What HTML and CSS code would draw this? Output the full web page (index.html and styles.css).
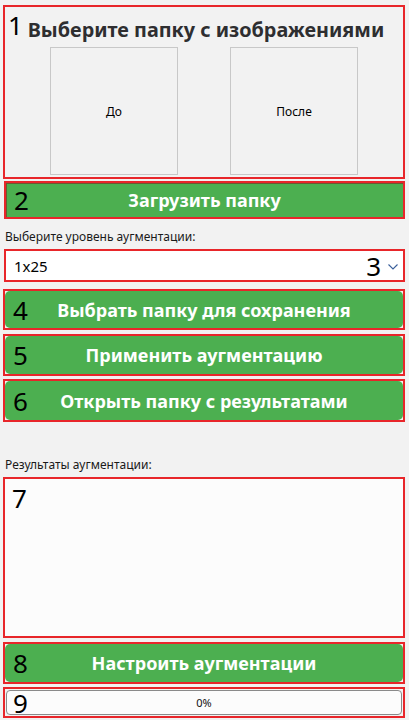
FILE: index.html
```html
<!DOCTYPE html>
<html lang="ru">
<head>
<meta charset="utf-8">
<title>Аугментация</title>
<link rel="stylesheet" href="styles.css">
</head>
<body>
<div class="app">
  <section class="box preview">
    <span class="num num-top">1</span>
    <h1 class="title">Выберите папку с изображениями</h1>
    <div class="frames">
      <div class="frame">До</div>
      <div class="frame">После</div>
    </div>
  </section>

  <div class="box btn-wrap b2"><span class="num">2</span><div class="btn">Загрузить папку</div></div>

  <div class="label l1">Выберите уровень аугментации:</div>
  <div class="box combo">
    <span class="combo-val">1x25</span>
    <span class="num num-combo">3</span>
    <svg class="chev" width="10" height="6" viewBox="0 0 10 6"><polyline points="0.5,0.5 5,5 9.5,0.5" fill="none" stroke="#3a5f9a" stroke-width="1.1"/></svg>
  </div>

  <div class="box btn-wrap b4"><span class="num">4</span><div class="btn">Выбрать папку для сохранения</div></div>
  <div class="box btn-wrap b5"><span class="num">5</span><div class="btn">Применить аугментацию</div></div>
  <div class="box btn-wrap b6"><span class="num">6</span><div class="btn">Открыть папку с результатами</div></div>

  <div class="label l2">Результаты аугментации:</div>
  <div class="box results"><span class="num num-top7">7</span></div>

  <div class="box btn-wrap b8"><span class="num">8</span><div class="btn">Настроить аугментации</div></div>
  <div class="box progress-wrap">
    <div class="progress"><span class="num num-prog">9</span><span class="pct">0%</span></div>
  </div>
</div>
</body>
</html>
```
FILE: styles.css
```css
* { box-sizing: border-box; }
html, body { margin: 0; padding: 0; }
body {
  background: #f2f2f2;
  font-family: "Noto Sans", "Open Sans", sans-serif;
  color: #000;
  width: 409px;
  height: 720px;
  overflow: hidden;
}
.app {
  display: flex;
  flex-direction: column;
  padding: 5px 4px 0 3px;
}
.box {
  position: relative;
  border: 2px solid #e8262a;
}
.num {
  position: absolute;
  font-size: 26px;
  line-height: 1;
  font-weight: 400;
  color: #000;
  left: 8px;
  top: 50%;
  transform: translateY(-50%);
}
.preview {
  height: 174px;
  display: flex;
  flex-direction: column;
  align-items: center;
  background: #f2f2f2;
}
.num-top { top: 5px; transform: none; left: 3px; }
.title {
  margin: 10px 0 0 4px;
  font-size: 19.8px;
  line-height: 26px;
  font-weight: 700;
  color: #2e2e30;
}
.frames {
  display: flex;
  gap: 52px;
  margin-top: 4px;
}
.frame {
  width: 128px;
  height: 128px;
  border: 1px solid #c8c8c8;
  display: flex;
  align-items: center;
  justify-content: center;
  font-size: 12px;
  color: #000;
}
.btn-wrap {
  display: flex;
  padding: 0;
}
.btn {
  flex: 1;
  background: #4caf50;
  border-radius: 5px;
  color: #fff;
  font-weight: 700;
  font-size: 18px;
  display: flex;
  align-items: center;
  justify-content: center;
}
.btn-wrap .num { z-index: 1; }
.b2 { margin-top: 2px; height: 38px; margin-left: 1px; }
.b2 .btn { border-radius: 0; box-shadow: inset 1px 1px 0 #6b5a30; }
.label {
  font-size: 12px;
  line-height: 16px;
  padding-left: 2px;
  color: #1a1a1a;
}
.l1 { margin-top: 10px; }
.combo {
  margin-top: 4px;
  margin-left: 1px;
  height: 33px;
  background: #fff;
  display: flex;
  align-items: center;
  padding-left: 8px;
}
.combo-val { font-size: 15px; }
.num-combo { left: auto; right: 22px; }
.chev { position: absolute; right: 5px; top: 13px; }
.b4 { margin-top: 7px; height: 41px; }
.b5 { margin-top: 4px; height: 42px; }
.b6 { margin-top: 3px; height: 43px; }
.l2 { margin-top: 35px; }
.results {
  margin-top: 4px;
  height: 161px;
  background: #fcfcfc;
}
.num-top7 { top: 6px; transform: none; left: 7px; }
.b8 { margin-top: 4px; height: 42px; }
.progress-wrap {
  margin-top: 3px;
  height: 31px;
  padding: 1px;
}
.progress {
  position: relative;
  height: 100%;
  background: #fcfcfc;
  border: 1px solid #8a8a8a;
  border-radius: 4px;
  display: flex;
  align-items: center;
  justify-content: center;
}
.pct { font-size: 11px; color: #111; }
.num-prog { left: 6px; }
```
